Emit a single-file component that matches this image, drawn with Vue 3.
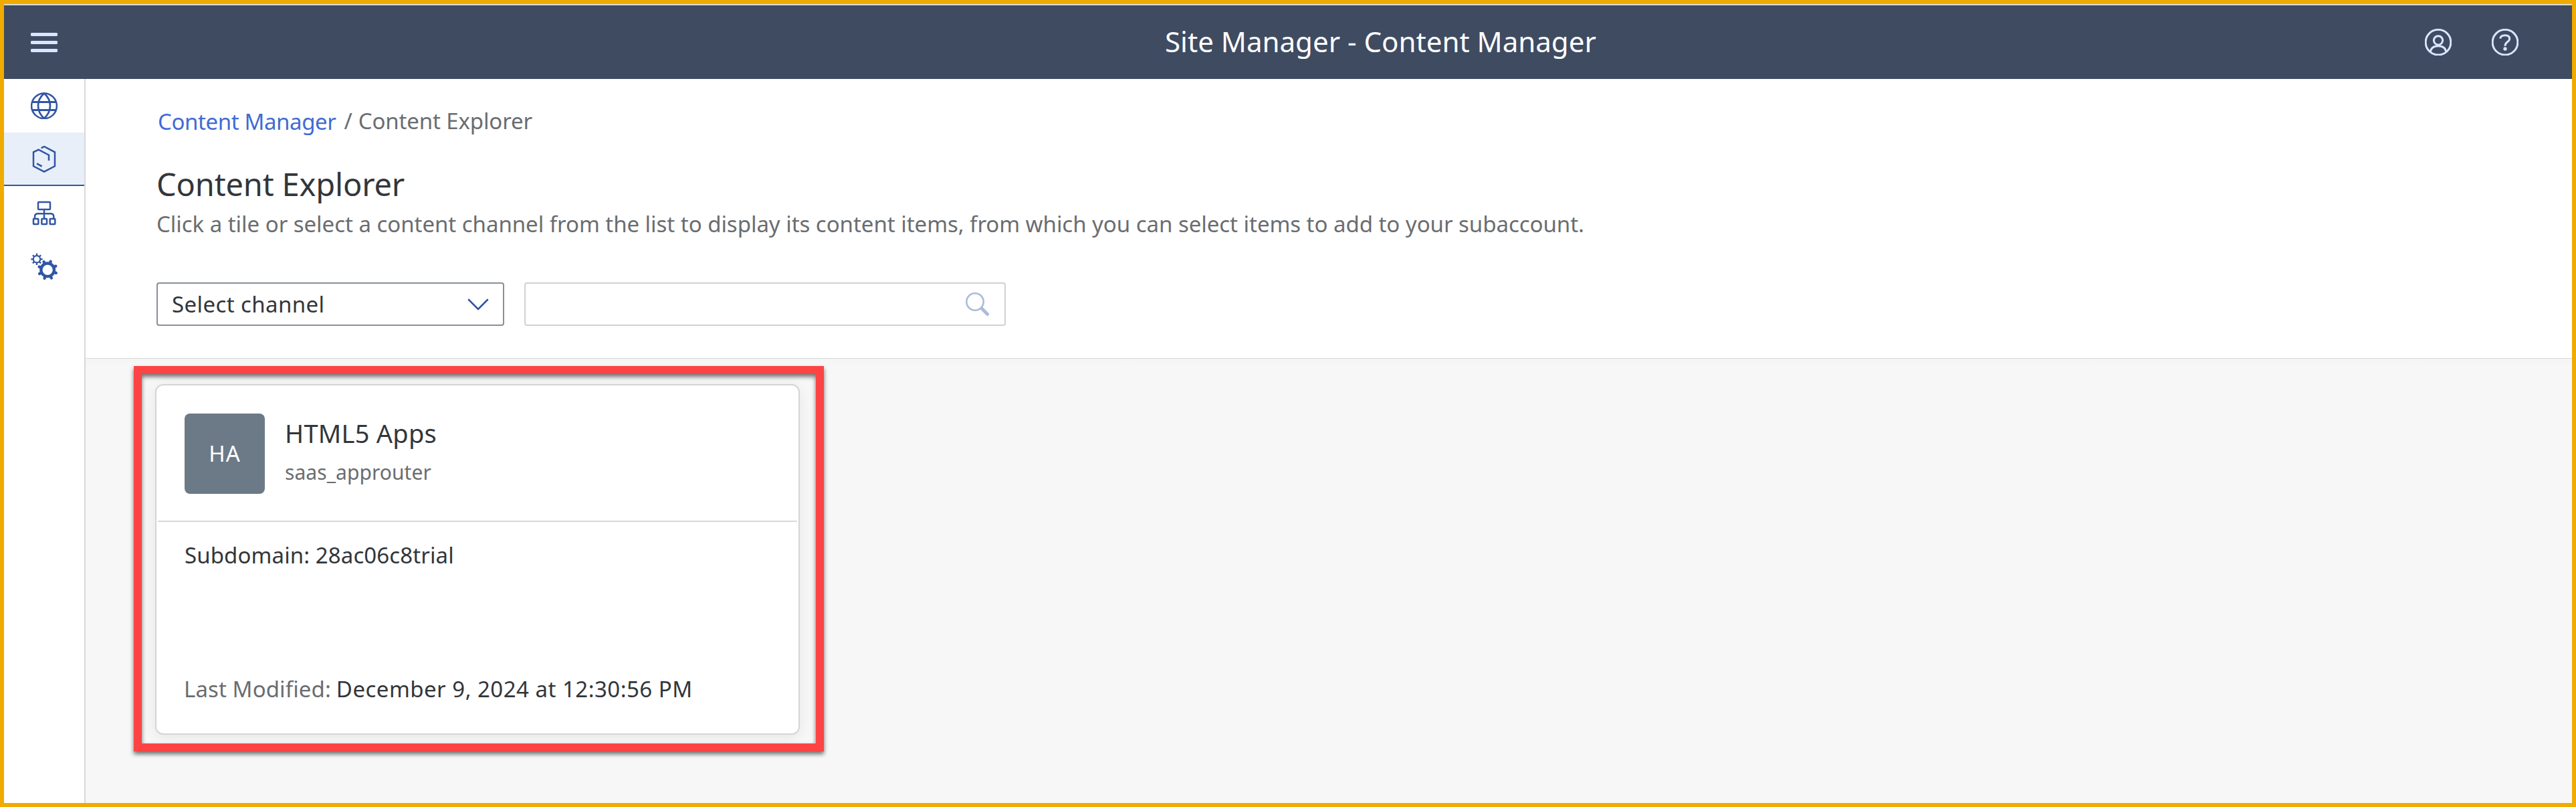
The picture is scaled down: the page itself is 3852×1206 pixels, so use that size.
<script setup>
const tile = {
  initials: 'HA',
  title: 'HTML5 Apps',
  subtitle: 'saas_approuter',
  subdomain: 'Subdomain: 28ac06c8trial',
  modified: 'December 9, 2024 at 12:30:56 PM',
}
const teeth = [0, 45, 90, 135, 180, 225, 270, 315]
</script>

<template>
  <div class="page">
    <header class="shell">
      <div class="shell-left">
        <svg class="icon light" viewBox="0 0 40 40">
          <path d="M2 8.500H38M2 20.500H38M2 32.500H38" stroke-width="5" stroke-linecap="round" />
        </svg>
      </div>
      <h1 class="shell-title">Site Manager - Content Manager</h1>
      <div class="shell-actions">
        <svg class="icon light" viewBox="222 130 120 120">
          <circle cx="282" cy="190.500" r="56.500" stroke-width="9" />
          <circle cx="282" cy="182" r="20" stroke-width="9" />
          <path d="M246 236Q250 207 282 207Q314 207 318 236" stroke-width="9" />
        </svg>
        <svg class="icon light" viewBox="522 130 120 120">
          <circle cx="582" cy="190.500" r="56.500" stroke-width="9" />
          <path d="M560 174Q562 159 582 159Q602 159 602 174Q602 182 592 189Q582 196 582 207" stroke-width="9" />
          <circle class="solid" cx="582" cy="220" r="8" />
        </svg>
      </div>
    </header>

    <div class="body">
      <nav class="side">
        <a class="side-item">
          <svg class="icon" viewBox="0 0 40 40">
            <circle cx="20" cy="20.300" r="18.900" stroke-width="2.500" />
            <path d="M20 1.500C8 12 8 28 20 39C32 28 32 12 20 1.500Z" stroke-width="2.700" />
            <path d="M2.500 14.500H37.500M2.500 26.500H37.500" stroke-width="3" />
          </svg>
        </a>
        <a class="side-item selected">
          <svg class="icon" viewBox="30 39 120 120">
            <path d="M77 49L90 42L138 67V130L90 155L42 130V67L65 56L111 80V105" stroke-width="7.500" />
            <path d="M57 118L80 131" stroke-width="8" />
          </svg>
        </a>
        <a class="side-item">
          <svg class="icon" viewBox="138 204 120 120">
            <g stroke-width="7.500">
              <rect x="171" y="216" width="54" height="33" rx="3" />
              <path d="M198 249V291M156 291V282Q156 268 170 268H227Q241 268 241 282V291" />
              <rect x="150" y="291" width="22" height="24" rx="2" />
              <rect x="187" y="291" width="23" height="24" rx="2" />
              <rect x="224" y="291" width="23" height="24" rx="2" />
            </g>
          </svg>
        </a>
        <a class="side-item">
          <svg class="icon" viewBox="138 444 120 120">
            <circle cx="213.500" cy="520" r="29.500" stroke-width="13" />
            <path
              v-for="a in teeth"
              :key="'b' + a"
              d="M213.500 488V480"
              stroke-width="13"
              stroke-linecap="round"
              :transform="`rotate(${a + 20} 213.500 520)`"
            />
            <circle cx="165" cy="472" r="15.500" stroke-width="6.500" />
            <path
              v-for="a in teeth"
              :key="'s' + a"
              d="M165 456V446"
              stroke-width="7"
              :transform="`rotate(${a} 165 472)`"
            />
          </svg>
        </a>
      </nav>

      <main class="main">
        <section class="intro">
          <div class="crumbs">
            <a class="crumb-link">Content Manager</a>
            <span class="crumb-sep">/</span>
            <span class="crumb-current">Content Explorer</span>
          </div>
          <h2 class="heading">Content Explorer</h2>
          <p class="desc">Click a tile or select a content channel from the list to display its content items, from which you can select items to add to your subaccount.</p>
          <div class="filters">
            <div class="select">
              <span>Select channel</span>
              <svg class="chevron" viewBox="0 0 32 18">
                <path d="M2 2L16 16L30 2" stroke-width="2.600" stroke-linecap="round" stroke-linejoin="round" />
              </svg>
            </div>
            <div class="search">
              <svg class="lens" viewBox="0 0 36 36">
                <circle cx="14" cy="14" r="12.700" stroke-width="2.600" />
                <path d="M24 24L32.500 32.500" stroke-width="5" stroke-linecap="round" />
              </svg>
            </div>
          </div>
        </section>

        <section class="tiles">
          <div class="tile-slot">
            <article class="card">
              <div class="card-head">
                <div class="avatar">{{ tile.initials }}</div>
                <div class="card-names">
                  <div class="card-title">{{ tile.title }}</div>
                  <div class="card-sub">{{ tile.subtitle }}</div>
                </div>
              </div>
              <div class="card-body">
                <div class="subdomain">{{ tile.subdomain }}</div>
                <div class="modified">
                  <span class="label">Last Modified:</span>
                  <span class="date">{{ tile.modified }}</span>
                </div>
              </div>
            </article>
            <div class="highlight"></div>
          </div>
        </section>
      </main>
    </div>
  </div>
</template>

<style scoped>
.page {
  box-sizing: border-box;
  width: 3852px;
  height: 1206px;
  border: 6px solid #f0ab00;
  display: flex;
  flex-direction: column;
  background: #fff;
  font-family: "Noto Sans", sans-serif;
  font-size: 33px;
  line-height: 44px;
  color: #32363a;
  overflow: hidden;
  white-space: nowrap;
}
svg {
  display: block;
  fill: none;
  stroke: #3156a3;
}
.icon {
  width: 40px;
  height: 40px;
  flex: none;
}
.icon.light {
  stroke: #d8e6ff;
}
.solid {
  fill: #d8e6ff;
  stroke: none;
}
.shell {
  box-sizing: border-box;
  flex: none;
  height: 112px;
  border-top: 2px solid #dcdcdc;
  background: #3f4b61;
  display: flex;
  align-items: center;
  padding: 0 80px 0 40px;
}
.shell-left {
  width: 1696px;
}
.shell-title {
  margin: 0;
  padding-bottom: 3px;
  font-size: 42px;
  line-height: 60px;
  font-weight: 400;
  letter-spacing: 0.03px;
  color: #fff;
}
.shell-actions {
  margin-left: auto;
  display: flex;
  gap: 60px;
}
.body {
  flex: 1;
  display: flex;
  min-height: 0;
}
.side {
  box-sizing: border-box;
  flex: none;
  width: 122px;
  border-right: 2px solid #d9d9d9;
}
.side-item {
  box-sizing: border-box;
  height: 80px;
  display: flex;
  align-items: center;
  justify-content: center;
}
.side-item.selected {
  background: #e8eff9;
  box-shadow: inset 0 -2px #3156a3;
}
.main {
  flex: 1;
  display: flex;
  flex-direction: column;
}
.intro {
  box-sizing: border-box;
  flex: none;
  height: 418px;
  padding: 42px 0 0 106px;
  border-bottom: 1px solid #d9d9d9;
}
.crumbs {
  display: flex;
  padding-left: 2px;
  color: #6a6d70;
}
.crumb-link {
  color: #416bd3;
  letter-spacing: -0.4px;
}
.crumb-sep {
  margin: -1px 9px 0 12px;
}
.crumb-current {
  margin-top: -1px;
  letter-spacing: -0.14px;
}
.heading {
  margin: 41px 0 0;
  font-size: 47px;
  line-height: 60px;
  font-weight: 400;
  letter-spacing: -0.17px;
}
.desc {
  margin: 8px 0 0;
  color: #6a6d70;
  letter-spacing: -0.035px;
}
.filters {
  margin-top: 65px;
  display: flex;
  gap: 30px;
}
.select,
.search {
  box-sizing: border-box;
  height: 65px;
  border: 2px solid #898e99;
  border-radius: 4px;
  display: flex;
  align-items: center;
  justify-content: space-between;
}
.select {
  width: 520px;
  padding: 0 21px;
  letter-spacing: 0.4px;
}
.chevron {
  width: 32px;
  height: 18px;
}
.search {
  width: 720px;
  border-color: #d0d1d7;
  justify-content: flex-end;
  padding-right: 22px;
}
.lens {
  width: 36px;
  height: 36px;
  stroke: #adbbdc;
}
.tiles {
  flex: 1;
  padding: 38px 0 0 104px;
  background: linear-gradient(#f4f4f4, #f7f7f7 10px);
}
.tile-slot {
  position: relative;
  width: 964px;
  height: 524px;
}
.card {
  box-sizing: border-box;
  height: 524px;
  border: 2px solid #d5d5d5;
  border-radius: 12px;
  background: #fff;
  box-shadow: 0 4px 20px rgba(0, 0, 0, 0.07);
  display: flex;
  flex-direction: column;
}
.card-head {
  box-sizing: border-box;
  height: 204px;
  margin: 0 2px;
  padding: 42px 40px 0;
  border-bottom: 2px solid #d9d9d9;
  display: flex;
}
.avatar {
  width: 120px;
  height: 120px;
  border-radius: 8px;
  background: #6c7a87;
  color: #fff;
  line-height: 120px;
  text-align: center;
  letter-spacing: 1px;
}
.card-names {
  padding: 5px 0 0 30px;
}
.card-title {
  font-size: 38px;
  line-height: 48px;
  letter-spacing: 0.25px;
}
.card-sub {
  margin-top: 15px;
  font-size: 30px;
  line-height: 40px;
  letter-spacing: 0.06px;
  color: #6a6d70;
}
.card-body {
  flex: 1;
  display: flex;
  flex-direction: column;
  justify-content: space-between;
  padding: 28px 40px 44px 42px;
}
.subdomain {
  letter-spacing: 0.1px;
}
.modified {
  display: flex;
  gap: 8px;
  margin-left: -1px;
}
.label {
  color: #6a6d70;
  letter-spacing: 0.1px;
}
.date {
  letter-spacing: 0.48px;
}
.highlight {
  position: absolute;
  left: -32px;
  top: -27px;
  box-sizing: border-box;
  width: 1032px;
  height: 576px;
  border: 12px solid #fd4444;
  filter: drop-shadow(0 4px 3px rgba(0, 0, 0, 0.55));
  pointer-events: none;
}
</style>

<style>
body {
  margin: 0;
}
</style>
